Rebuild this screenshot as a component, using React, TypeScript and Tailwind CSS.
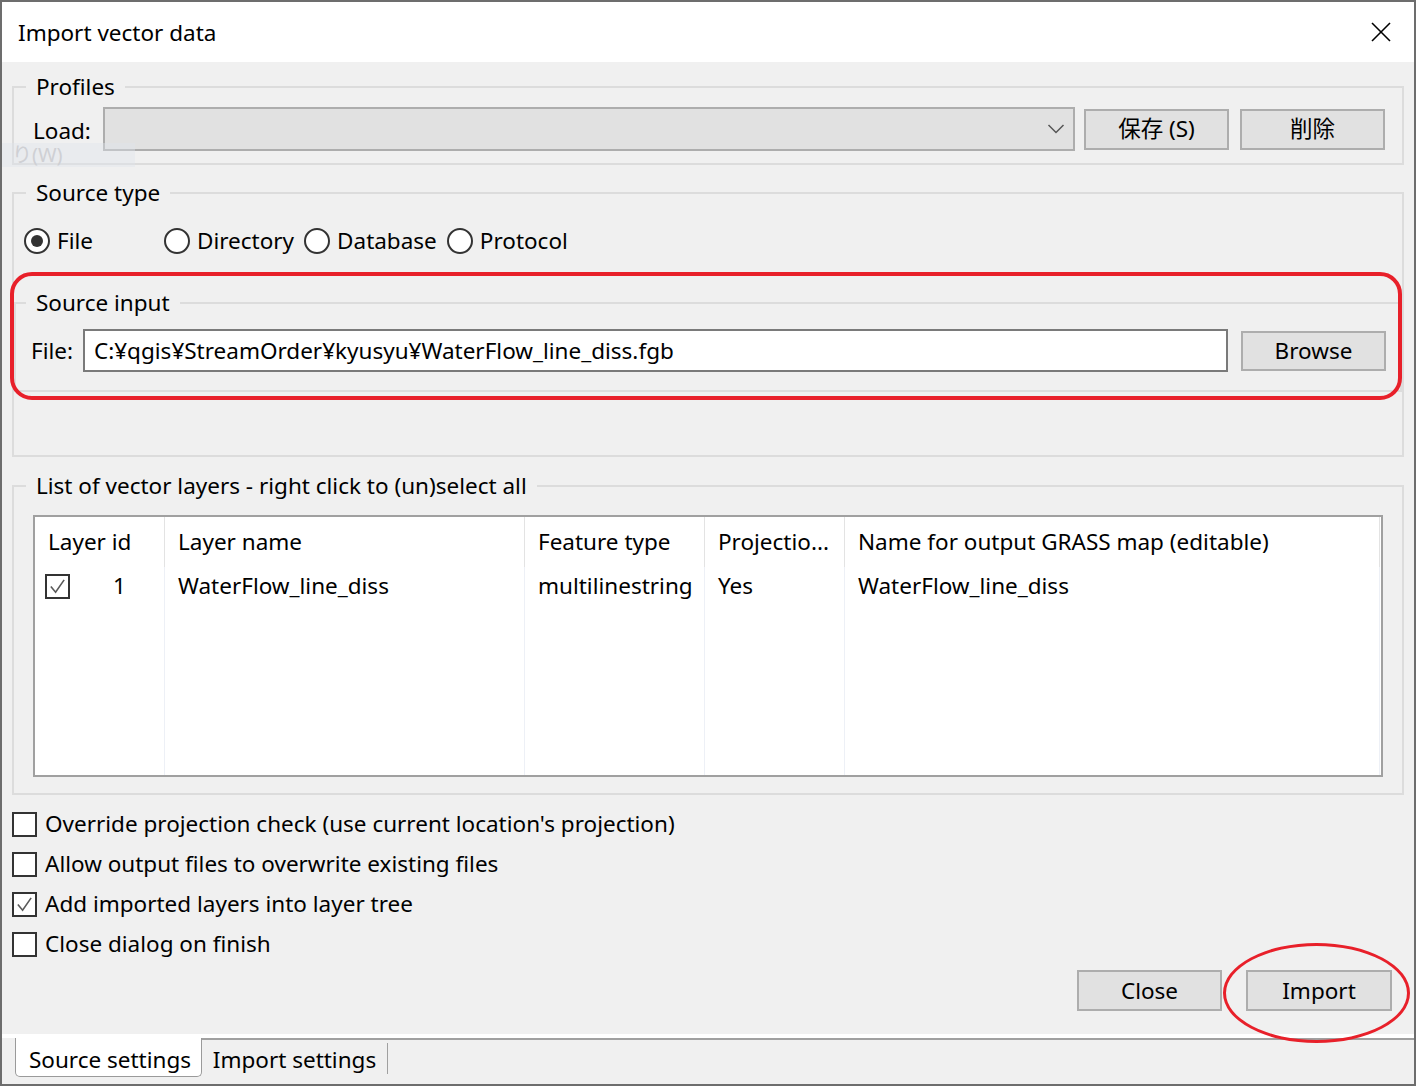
import React from "react";

function Btn({ children, w = "w-[145px]", h = "h-[41px]" }: { children: React.ReactNode; w?: string; h?: string }) {
  return (
    <div className={"flex items-center justify-center bg-[#e1e1e1] border-2 border-[#adadad] shrink-0 " + w + " " + h}>
      {children}
    </div>
  );
}

function Check({ checked }: { checked?: boolean }) {
  return (
    <div className="w-[25px] h-[25px] border-2 border-[#333333] bg-white flex items-center justify-center shrink-0">
      {checked && (
        <svg width="19" height="19" viewBox="0 0 20 20">
          <polyline points="3,10 8,16 17,3" fill="none" stroke="#5a5a5a" strokeWidth="1.7" />
        </svg>
      )}
    </div>
  );
}

function Radio({ selected, label, w }: { selected?: boolean; label: string; w?: string }) {
  return (
    <div className={"flex items-center gap-[7px] " + (w ?? "")}>
      <div className="w-[26px] h-[26px] rounded-full border-2 border-[#333333] bg-white flex items-center justify-center shrink-0">
        {selected && <div className="w-[12px] h-[12px] rounded-full bg-[#333333]" />}
      </div>
      <span>{label}</span>
    </div>
  );
}

function Col({
  w,
  header,
  cell,
  last,
}: {
  w: string;
  header: React.ReactNode;
  cell: React.ReactNode;
  last?: boolean;
}) {
  return (
    <div className={"flex flex-col shrink-0 " + w}>
      <div className={"h-[50px] flex items-center pl-[13px] whitespace-nowrap " + (last ? "" : "border-r border-[#e3e3e3]")}>
        {header}
      </div>
      <div className={"flex-1 " + (last ? "" : "border-r border-[#edf0f6]")}>
        <div className="h-[38px] flex items-center pl-[13px] whitespace-nowrap">{cell}</div>
      </div>
    </div>
  );
}

export default function App() {
  return (
    <div className="relative w-[1416px] h-[1086px] bg-[#6d6d6d] p-[2px] flex flex-col overflow-hidden font-['Noto_Sans','Noto_Sans_CJK_JP',sans-serif] text-[22.5px] text-black leading-[30px]">
      {/* Title bar */}
      <div className="h-[60px] bg-white flex items-center justify-between pl-[16px] pr-[23px] shrink-0">
        <span className="pt-[2px]">Import vector data</span>
        <svg width="20" height="20" viewBox="0 0 20 20">
          <line x1="1" y1="1" x2="19" y2="19" stroke="#000" strokeWidth="1.6" />
          <line x1="19" y1="1" x2="1" y2="19" stroke="#000" strokeWidth="1.6" />
        </svg>
      </div>

      {/* Body */}
      <div className="flex-1 bg-[#f0f0f0] flex flex-col">
        <div className="px-[10px] pt-[10px] flex flex-col">
          {/* Profiles */}
          <fieldset className="border-2 border-[#dcdcdc] min-w-0">
            <legend className="ml-[12px] px-[10px] leading-[30px]">Profiles</legend>
            <div className="flex items-center pt-[5px] pb-[12px] pl-[19px] pr-[17px]">
              <span className="w-[70px] shrink-0 pt-[3px]">Load:</span>
              <div className="flex-1 h-[44px] bg-[#e1e1e1] border-2 border-[#adadad] flex items-center justify-end pr-[8px]">
                <svg width="18" height="12" viewBox="0 0 18 12">
                  <polyline points="1.5,2 9,9.5 16.5,2" fill="none" stroke="#555" strokeWidth="1.5" />
                </svg>
              </div>
              <div className="ml-[9px]">
                <Btn>保存 (S)</Btn>
              </div>
              <div className="ml-[11px]">
                <Btn>削除</Btn>
              </div>
            </div>
          </fieldset>

          {/* Source type */}
          <fieldset className="mt-[13px] border-2 border-[#dcdcdc] min-w-0">
            <legend className="ml-[12px] px-[10px] leading-[30px]">Source type</legend>
            <div className="mt-[18px] pl-[10px] h-[30px] flex items-center gap-[10px]">
              <Radio selected label="File" w="w-[130px]" />
              <Radio label="Directory" />
              <Radio label="Database" />
              <Radio label="Protocol" />
            </div>
            <fieldset className="mt-[32px] border-2 border-[#dcdcdc] min-w-0">
              <legend className="ml-[10px] px-[10px] leading-[30px]">Source input</legend>
              <div className="flex items-center pt-[11px] pb-[18px] pl-[15px] pr-[14px]">
                <span className="w-[52px] shrink-0">File:</span>
                <div className="flex-1 h-[43px] bg-white border-2 border-[#7a7a7a] flex items-center pl-[9px] whitespace-nowrap">
                  C:¥qgis¥StreamOrder¥kyusyu¥WaterFlow_line_diss.fgb
                </div>
                <div className="ml-[13px]">
                  <Btn h="h-[40px]">Browse</Btn>
                </div>
              </div>
            </fieldset>
            <div className="h-[63px]" />
          </fieldset>

          {/* List of vector layers */}
          <fieldset className="mt-[14px] border-2 border-[#dcdcdc] min-w-0">
            <legend className="ml-[12px] px-[10px] leading-[30px]">List of vector layers - right click to (un)select all</legend>
            <div className="pt-[14px] pb-[16px] px-[19px]">
              <div className="h-[262px] border-2 border-[#a0a0a0] bg-white flex overflow-hidden">
                <Col
                  w="w-[130px]"
                  header="Layer id"
                  cell={
                    <div className="flex items-center -ml-[3px]">
                      <Check checked />
                      <span className="ml-[43px]">1</span>
                    </div>
                  }
                />
                <Col w="w-[360px]" header="Layer name" cell="WaterFlow_line_diss" />
                <Col w="w-[180px]" header="Feature type" cell="multilinestring" />
                <Col w="w-[140px]" header="Projectio..." cell="Yes" />
                <Col w="w-[535px]" header="Name for output GRASS map (editable)" cell="WaterFlow_line_diss" />
                <div className="flex-1" />
              </div>
            </div>
          </fieldset>

          {/* Options */}
          <div className="mt-[9px] flex flex-col">
            {[
              { t: "Override projection check (use current location's projection)", c: false },
              { t: "Allow output files to overwrite existing files", c: false },
              { t: "Add imported layers into layer tree", c: true },
              { t: "Close dialog on finish", c: false },
            ].map((o) => (
              <div key={o.t} className="h-[40px] flex items-center gap-[8px]">
                <Check checked={o.c} />
                <span className="whitespace-nowrap">{o.t}</span>
              </div>
            ))}
          </div>
        </div>

        {/* Buttons */}
        <div className="mt-[6px] flex justify-end gap-[24px] pr-[22px]">
          <Btn>Close</Btn>
          <Btn w="w-[146px]">Import</Btn>
        </div>

        {/* Tabs */}
        <div className="mt-[23px] h-[4px] bg-white" />
        <div className="flex h-[39px]">
          <div className="w-[13px]" />
          <div className="w-[187px] bg-white border-x border-b border-[#9a9a9a] rounded-b-[5px] flex items-center justify-center pt-[6px] pl-[3px]">
            Source settings
          </div>
          <div className="flex-1 border-t-2 border-[#a0a0a0] flex items-center">
            <div className="w-[186px] h-[31px] border-r border-[#a0a0a0] flex items-center justify-center pt-[3px]">
              Import settings
            </div>
          </div>
        </div>
      </div>

      {/* Ghost artifact from another window */}
      <div className="absolute left-[2px] top-[143px] w-[133px] h-[24px] bg-[#dfe3ea]/40 flex items-center pl-[10px]">
        <span className="text-[#cfd0d4] text-[20px] leading-[22px] whitespace-nowrap">り(W)</span>
      </div>

      {/* Red annotations */}
      <div className="absolute left-[10px] top-[272px] w-[1392px] h-[128px] border-4 border-[#e8202a] rounded-[22px] pointer-events-none" />
      <div className="absolute left-[1223px] top-[943px] w-[187px] h-[100px] border-[3.5px] border-[#e8202a] rounded-[50%] pointer-events-none" />
    </div>
  );
}
